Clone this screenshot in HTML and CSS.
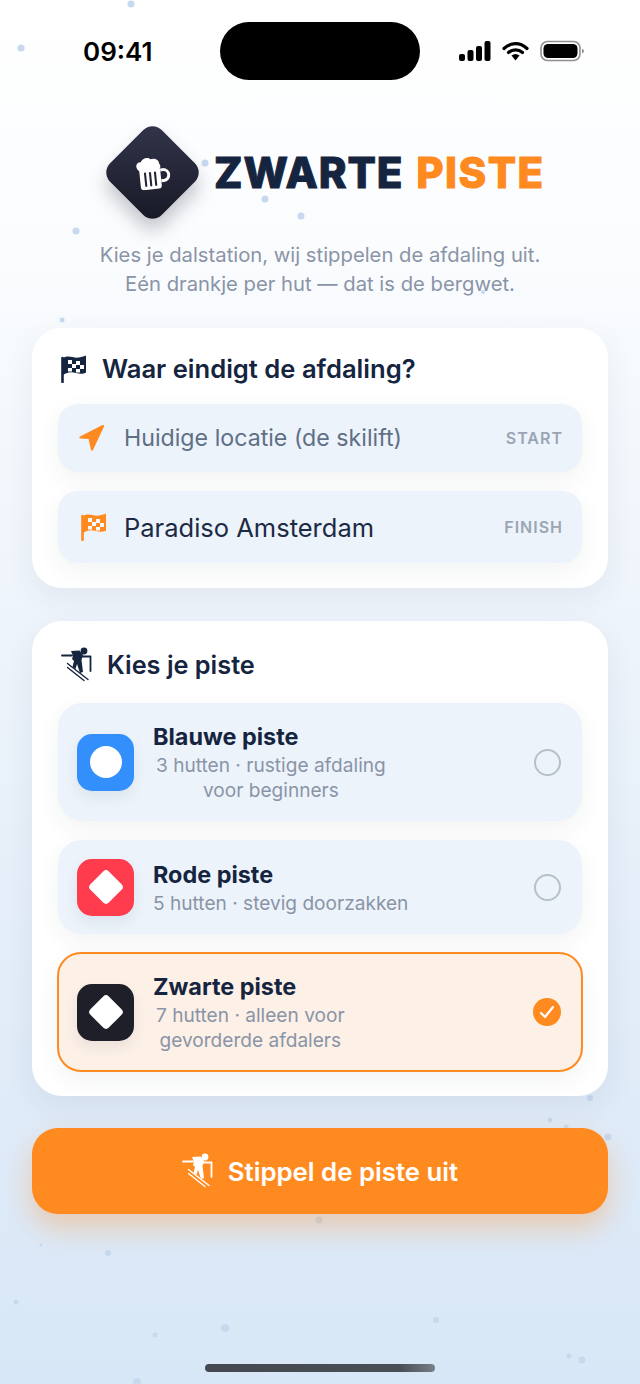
FILE: index.html
```html
<!doctype html>
<html lang="en">
<head>
	<meta charset="utf-8">
	<title>Zwarte Piste</title>
	<link rel="stylesheet" href="styles.css">
</head>
<body>
	<!-- snow on the background -->
	<svg class="snow" width="640" height="1384" viewBox="0 0 640 1384">
		<circle cx="131" cy="4" r="3.5"/><circle cx="21" cy="48" r="3.5"/><circle cx="205" cy="163" r="3.5"/>
		<circle cx="265" cy="199" r="3.5"/><circle cx="301" cy="216" r="3.5"/><circle cx="76" cy="231" r="3.5"/>
		<circle cx="483" cy="292" r="2"/><circle cx="62" cy="320" r="2.5"/><circle cx="590" cy="1098" r="3"/>
		<circle cx="550" cy="1120" r="2.5"/><circle cx="608" cy="1137" r="3.5"/><circle cx="566" cy="1127" r="2.5"/>
		<circle cx="319" cy="1220" r="3.5"/><circle cx="41" cy="1245" r="1.5"/><circle cx="108" cy="1253" r="3"/>
		<circle cx="16" cy="1302" r="2.5"/><circle cx="155" cy="1335" r="2.5"/><circle cx="225" cy="1328" r="4"/>
		<circle cx="436" cy="1320" r="3"/><circle cx="569" cy="1356" r="2.5"/><circle cx="582" cy="1360" r="3.5"/>
		<circle cx="137" cy="1382" r="4"/>
	</svg>

	<div class="screen">
		<div class="statusbar">
			<span class="time">09:41</span>
			<span class="island"></span>
			<span class="status-icons">
				<svg width="32" height="20" viewBox="0 0 32 20">
					<rect x="0" y="13" width="6" height="7" rx="2"/>
					<rect x="8.5" y="9" width="6" height="11" rx="2"/>
					<rect x="17" y="5" width="6" height="15" rx="2"/>
					<rect x="25.5" y="0" width="6" height="20" rx="2"/>
				</svg>
				<svg width="27" height="20" viewBox="0 0 27 20">
					<path d="M2 7.5C9 1 18 1 25 7.5" fill="none" stroke="#000" stroke-width="3.2" stroke-linecap="round"/>
					<path d="M6.5 11.5C10.5 8 16.5 8 20.5 11.5" fill="none" stroke="#000" stroke-width="3.2" stroke-linecap="round"/>
					<path d="M9.5 14.5Q13.5 11.5 17.5 14.5L13.5 19.5Z"/>
				</svg>
				<svg width="45" height="22" viewBox="0 0 45 22">
					<rect x="1" y="1.5" width="39" height="19" rx="6.5" fill="none" stroke="#8f8f8f" stroke-width="1.6"/>
					<rect x="3.5" y="4" width="34" height="14" rx="4.5"/>
					<path d="M42 8.5Q44 9.5 44 11T42 13.500Z" fill="#8f8f8f"/>
				</svg>
			</span>
		</div>

		<div class="brand">
			<div class="diamond">
				<svg class="beer" width="36" height="34" viewBox="0 0 36 34">
					<g transform="rotate(-6 18 17)">
						<path d="M5 13h21v17a3 3 0 0 1-3 3H8a3 3 0 0 1-3-3z" fill="#fff"/>
						<path d="M3.500 12C1 8 4 4 7.500 5 9 1 15 0 17.500 3 21 1.500 26 4 25.500 8 27.500 10 26.500 14 24 14H6.500C5 14 4.200 13 3.500 12Z" fill="#fff"/>
						<path d="M10.500 16.500V29M15.500 16.500V29M20.500 16.500V29" stroke="#23263a" stroke-width="2.100" stroke-linecap="round"/>
						<path d="M26 14.500h2.500a5.500 5.500 0 0 1 0 11H26" fill="none" stroke="#fff" stroke-width="3"/>
					</g>
				</svg>
			</div>
			<h1 class="logo">ZWARTE <span class="logo-orange">PISTE</span></h1>
		</div>

		<p class="intro">Kies je dalstation, wij stippelen de afdaling uit.<br>Eén drankje per hut — dat is de bergwet.</p>

		<section class="card route-card">
			<h2 class="card-title">
				<svg class="flag navy" width="26" height="28" viewBox="0 0 26 28">
					<path d="M1.500 27V3" stroke="currentColor" stroke-width="2.600" stroke-linecap="round"/>
					<path d="M2 3C8-.5 12 3.500 18 2.500 21 2 23.500 1 25 .5V17.500C19 21 14 16.500 8 17.500 5.500 18 3.500 19 2 20Z" fill="currentColor"/>
					<path d="M7 5h4v4H7zM15 6h4v4h-4zM11 9h4v4h-4zM19 10h4v4h-4zM7 13h4v3.500H7zM15 14h4v3.500h-4z" fill="#fff"/>
				</svg>
				<span class="title-text">Waar eindigt de afdaling?</span>
			</h2>
			<div class="field field-start">
				<svg class="field-icon" width="28" height="28" viewBox="0 0 28 28">
					<path d="M25 2 2.500 13.500 11.500 14 14 25.500Z" fill="#ff8a1f" stroke="#ff8a1f" stroke-width="2.200" stroke-linejoin="round"/>
				</svg>
				<span class="field-text">Huidige locatie (de skilift)</span>
				<span class="field-tag">START</span>
			</div>
			<div class="field field-finish">
				<svg class="field-icon flag orange" width="26" height="28" viewBox="0 0 26 28">
					<path d="M1.500 27V3" stroke="currentColor" stroke-width="2.600" stroke-linecap="round"/>
					<path d="M2 3C8-.5 12 3.500 18 2.500 21 2 23.500 1 25 .5V17.500C19 21 14 16.500 8 17.500 5.500 18 3.500 19 2 20Z" fill="currentColor"/>
					<path d="M7 5h4v4H7zM15 6h4v4h-4zM11 9h4v4h-4zM19 10h4v4h-4zM7 13h4v3.500H7zM15 14h4v3.500h-4z" fill="#f4f7fb"/>
				</svg>
				<span class="field-text dark">Paradiso Amsterdam</span>
				<span class="field-tag">FINISH</span>
			</div>
		</section>

		<section class="card piste-card">
			<h2 class="card-title small-gap">
				<svg class="skier navy" width="32" height="36" viewBox="0 0 32 36">
					<circle cx="23" cy="4" r="3.400" fill="currentColor"/>
					<path d="M1 8.500H11" stroke="currentColor" stroke-width="1.800" stroke-linecap="round"/>
					<path d="M18 6 21.500 9.500H29.500V24" fill="none" stroke="currentColor" stroke-width="1.800" stroke-linejoin="round" stroke-linecap="round"/>
					<path d="M10 4 18.500 3.500 22 8 20.500 13 22 25 19 26 16 17 14.500 22 11.500 20 13 14 11 12 12 9Z" fill="currentColor"/>
					<path d="M6.500 16.500 27 32.500M6.500 20.500 23 33.500" fill="none" stroke="currentColor" stroke-width="1.400" stroke-linecap="round"/>
				</svg>
				<span class="title-text">Kies je piste</span>
			</h2>

			<div class="option option-tall">
				<span class="tile tile-blue"><span class="dot"></span></span>
				<div class="option-text">
					<div class="option-name">Blauwe piste</div>
					<div class="option-sub centered">3 hutten · rustige afdaling<br>voor beginners</div>
				</div>
				<span class="radio"></span>
			</div>

			<div class="option option-short">
				<span class="tile tile-red"><span class="rhomb"></span></span>
				<div class="option-text">
					<div class="option-name">Rode piste</div>
					<div class="option-sub">5 hutten · stevig doorzakken</div>
				</div>
				<span class="radio"></span>
			</div>

			<div class="option option-tall option-selected">
				<span class="tile tile-black"><span class="rhomb"></span></span>
				<div class="option-text">
					<div class="option-name">Zwarte piste</div>
					<div class="option-sub centered">7 hutten · alleen voor<br>gevorderde afdalers</div>
				</div>
				<span class="radio radio-on">
					<svg width="16" height="14" viewBox="0 0 16 14">
						<path d="M2 8 6 12 14 2" fill="none" stroke="#fff" stroke-width="2.200" stroke-linecap="round" stroke-linejoin="round"/>
					</svg>
				</span>
			</div>
		</section>

		<button class="go-button" type="button">
			<svg class="skier" width="32" height="36" viewBox="0 0 32 36">
				<circle cx="23" cy="4" r="3.400" fill="currentColor"/>
				<path d="M1 8.500H11" stroke="currentColor" stroke-width="1.800" stroke-linecap="round"/>
				<path d="M18 6 21.500 9.500H29.500V24" fill="none" stroke="currentColor" stroke-width="1.800" stroke-linejoin="round" stroke-linecap="round"/>
				<path d="M10 4 18.500 3.500 22 8 20.500 13 22 25 19 26 16 17 14.500 22 11.500 20 13 14 11 12 12 9Z" fill="currentColor"/>
				<path d="M6.500 16.500 27 32.500M6.500 20.500 23 33.500" fill="none" stroke="currentColor" stroke-width="1.400" stroke-linecap="round"/>
			</svg>
			<span>Stippel de piste uit</span>
		</button>
	</div>

	<div class="home-bar"></div>
</body>
</html>
```

FILE: styles.css
```css
* {
	box-sizing: border-box;
}
html, body {
	margin: 0;
	padding: 0;
}
body {
	position: relative;
	width: 640px;
	height: 1384px;
	overflow: hidden;
	font-family: Inter, "Liberation Sans", sans-serif;
	color: #16253f;
	background: linear-gradient(180deg, #ffffff 0%, #fafcfe 18%, #eef4fb 45%, #e1ecf8 75%, #d8e7f7 100%);
}
.snow {
	position: absolute;
	top: 0;
	left: 0;
	fill: #c6d9ef;
}
.screen {
	position: relative;
	display: flex;
	flex-direction: column;
	padding-top: 22px;
}

/* status bar */
.statusbar {
	display: grid;
	grid-template-columns: 220px 200px 220px;
	align-items: center;
	height: 58px;
}
.time {
	padding-left: 83px;
	font-size: 26px;
	font-weight: 600;
	color: #000;
}
.island {
	height: 58px;
	border-radius: 29px;
	background: #000;
}
.status-icons {
	display: flex;
	align-items: center;
	gap: 11px;
	padding-left: 39px;
}

/* logo */
.brand {
	display: flex;
	align-items: center;
	gap: 25.5px;
	height: 73px;
	margin-top: 55.5px;
	padding-left: 115.5px;
}
.diamond {
	display: flex;
	align-items: center;
	justify-content: center;
	flex: none;
	width: 73px;
	height: 73px;
	border-radius: 13px;
	transform: rotate(45deg);
	background: linear-gradient(135deg, #33364b, #161825);
	box-shadow: 8px 8px 18px rgba(30, 35, 55, 0.25);
}
.beer {
	transform: rotate(-45deg);
}
.logo {
	margin: 0;
	font-size: 42px;
	font-weight: 800;
	letter-spacing: 0.9px;
	word-spacing: 3px;
	white-space: nowrap;
	color: #16253f;
	-webkit-text-stroke: 1px currentColor;
}
.logo-orange {
	letter-spacing: 1.4px;
	color: #ff8a1f;
}
.intro {
	margin: 31.5px 0 30px;
	font-size: 20.25px;
	line-height: 29px;
	text-align: center;
	color: #8a94a6;
}

/* cards */
.card {
	margin: 0 32px;
	padding: 26px 26px 25px;
	border-radius: 30px;
	background: #fff;
	box-shadow: 0 10px 30px rgba(40, 60, 90, 0.07);
}
.piste-card {
	margin-top: 33px;
	padding-top: 29px;
}
.card-title {
	display: flex;
	align-items: center;
	gap: 15px;
	height: 30px;
	margin: 0 0 20px 3px;
	font-size: 25.6px;
	font-weight: 600;
}
.title-text {
	margin-top: -2px;
}
.small-gap {
	gap: 14px;
	margin-bottom: 23px;
	font-size: 25.3px;
}
.navy {
	color: #16253f;
}
.orange {
	color: #ff8a1f;
}
.skier {
	flex: none;
}

/* from / to */
.field {
	display: flex;
	align-items: center;
	padding: 0 19px 0 20px;
	border-radius: 20px;
	background: #ecf3fb;
	box-shadow: 0 8px 24px rgba(40, 50, 70, 0.06);
}
.field-start {
	height: 68px;
	margin-bottom: 19px;
}
.field-finish {
	height: 72px;
}
.field-icon {
	flex: none;
	margin-right: 18px;
}
.field-finish .field-icon {
	margin-left: 3px;
	margin-right: 17px;
}
.field-text {
	flex: 1;
	font-size: 23.2px;
	color: #5f6f86;
}
.field-text.dark {
	font-size: 25.5px;
	color: #1c2a44;
}
.field-tag {
	font-size: 16px;
	font-weight: 600;
	letter-spacing: 1px;
	color: #9aa5b4;
}

/* piste options */
.option {
	display: flex;
	align-items: center;
	padding: 0 21px 0 19px;
	border-radius: 24px;
	background: #ecf3fb;
	box-shadow: 0 8px 24px rgba(40, 50, 70, 0.06);
}
.option + .option {
	margin-top: 19px;
}
.option-tall {
	height: 118px;
}
.option-short {
	height: 94px;
}
.option + .option-selected {
	height: 120px;
	margin: 18px -1px -1px;
	padding: 0 20px 0 18px;
	border: 2px solid #ff8a1f;
	background: #fcf0e7;
}
.tile {
	display: flex;
	align-items: center;
	justify-content: center;
	flex: none;
	width: 57px;
	height: 57px;
	border-radius: 15px;
	box-shadow: 0 6px 14px rgba(40, 50, 70, 0.08);
}
.tile-blue {
	background: #338ffb;
}
.tile-red {
	background: #ff3b4e;
}
.tile-black {
	background: #1e1f29;
}
.dot {
	width: 32px;
	height: 32px;
	border-radius: 50%;
	background: #fff;
}
.rhomb {
	width: 26px;
	height: 26px;
	border-radius: 4px;
	transform: rotate(45deg);
	background: #fff;
}
.option-text {
	flex: 1;
	margin: 2px 0 0 19px;
}
.option-name {
	margin-bottom: 3px;
	font-size: 23.4px;
	font-weight: 700;
	line-height: 27px;
}
.option-sub {
	font-size: 19.1px;
	line-height: 25px;
	color: #8a94a6;
}
.centered {
	display: inline-block;
	padding-left: 3px;
	text-align: center;
}
.radio {
	display: flex;
	align-items: center;
	justify-content: center;
	flex: none;
	width: 27px;
	height: 27px;
	border: 2px solid #b6c0cb;
	border-radius: 50%;
}
.radio-on {
	width: 28px;
	height: 28px;
	border: 0;
	background: #ff8a1f;
}

/* main button */
.go-button {
	display: flex;
	align-items: center;
	justify-content: center;
	gap: 14px;
	height: 86px;
	margin: 32px 32px 0;
	padding: 0;
	border: 0;
	border-radius: 26px;
	font-family: inherit;
	font-size: 25.8px;
	font-weight: 600;
	color: #fff;
	background: #ff8a1f;
	box-shadow: 0 14px 28px rgba(255, 138, 31, 0.32);
}

.home-bar {
	position: absolute;
	left: 205px;
	bottom: 12px;
	width: 230px;
	height: 8px;
	border-radius: 4px;
	background: linear-gradient(90deg, #45494f 0%, #4a4e55 85%, #7a7f87 100%);
}
```
